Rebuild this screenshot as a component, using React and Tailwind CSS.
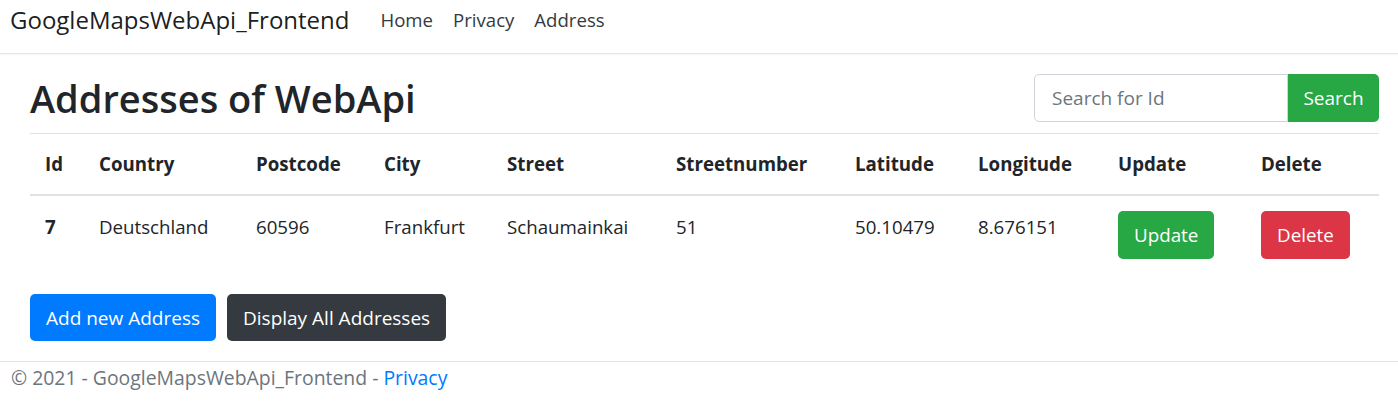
import React from 'react';

const columns = [
  { key: 'id', label: 'Id', w: 'w-[54px]' },
  { key: 'country', label: 'Country', w: 'w-[157px]' },
  { key: 'postcode', label: 'Postcode', w: 'w-[128px]' },
  { key: 'city', label: 'City', w: 'w-[123px]' },
  { key: 'street', label: 'Street', w: 'w-[169px]' },
  { key: 'streetnumber', label: 'Streetnumber', w: 'w-[179px]' },
  { key: 'latitude', label: 'Latitude', w: 'w-[123px]' },
  { key: 'longitude', label: 'Longitude', w: 'w-[140px]' },
  { key: 'update', label: 'Update', w: 'w-[143px]' },
  { key: 'delete', label: 'Delete', w: '' },
];

const addresses = [
  {
    id: 7,
    country: 'Deutschland',
    postcode: '60596',
    city: 'Frankfurt',
    street: 'Schaumainkai',
    streetnumber: '51',
    latitude: '50.10479',
    longitude: '8.676151',
  },
];

export default function App() {
  return (
    <div className="min-h-[402px] bg-white text-[18.7px] leading-[24px] text-[#212529] font-['Open_Sans',sans-serif]">
      <nav className="h-[54px] flex items-start pt-[5px] px-[10px] border-b border-[#e5e5e5] shadow-[0_1px_3px_rgba(0,0,0,0.04)]">
        <span className="text-[24px] leading-[30px] text-black/90 mr-[21px]">GoogleMapsWebApi_Frontend</span>
        <div className="flex text-[#343a40] text-[18.6px] leading-[30px]">
          <a className="px-[10px]">Home</a>
          <a className="px-[10px]">Privacy</a>
          <a className="px-[10px]">Address</a>
        </div>
      </nav>

      <main className="pl-[30px] pr-[19px]">
        <div className="flex items-center justify-between mt-[20px] h-[48px]">
          <h1 className="text-[38px] leading-[48px] font-semibold">Addresses of WebApi</h1>
          <div className="flex h-[48px]">
            <input
              placeholder="Search for Id"
              className="w-[254px] h-[48px] px-[17px] text-[19px] border border-[#ced4da] rounded-l-[5px] placeholder:text-[#6c757d] outline-none"
            />
            <button className="w-[91px] h-[48px] bg-[#28a745] text-white text-[19px] rounded-r-[5px]">Search</button>
          </div>
        </div>

        <table className="w-full table-fixed mt-[11px] border-t border-[#dee2e6] border-collapse">
          <colgroup>
            {columns.map((c) => (
              <col key={c.key} className={c.w} />
            ))}
          </colgroup>
          <thead>
            <tr className="border-b-2 border-[#dee2e6]">
              {columns.map((c) => (
                <th key={c.key} className="text-left font-bold pl-[15px] py-[18px] align-bottom">
                  {c.label}
                </th>
              ))}
            </tr>
          </thead>
          <tbody>
            {addresses.map((a) => (
              <tr key={a.id}>
                <td className="pl-[15px] pt-[19px] align-top font-bold">{a.id}</td>
                <td className="pl-[15px] pt-[19px] align-top">{a.country}</td>
                <td className="pl-[15px] pt-[19px] align-top">{a.postcode}</td>
                <td className="pl-[15px] pt-[19px] align-top">{a.city}</td>
                <td className="pl-[15px] pt-[19px] align-top">{a.street}</td>
                <td className="pl-[15px] pt-[19px] align-top">{a.streetnumber}</td>
                <td className="pl-[15px] pt-[19px] align-top">{a.latitude}</td>
                <td className="pl-[15px] pt-[19px] align-top">{a.longitude}</td>
                <td className="pl-[15px] pt-[15px] pb-[15px] align-top">
                  <button className="h-[48px] px-[16px] bg-[#28a745] text-white text-[18.8px] rounded-[5px]">Update</button>
                </td>
                <td className="pl-[15px] pt-[15px] pb-[15px] align-top">
                  <button className="h-[48px] px-[16px] bg-[#dc3545] text-white text-[18.8px] rounded-[5px]">Delete</button>
                </td>
              </tr>
            ))}
          </tbody>
        </table>

        <div className="flex gap-[11px] mt-[20px]">
          <button className="h-[47px] px-[16px] bg-[#007bff] text-white text-[19px] rounded-[5px]">Add new Address</button>
          <button className="h-[47px] px-[16px] bg-[#343a40] text-white text-[19px] rounded-[5px]">Display All Addresses</button>
        </div>
      </main>

      <footer className="mt-[20px] border-t border-[#e5e5e5] h-[41px] pt-[4px] px-[11px] text-[19.4px] text-[#6c757d]">
        © 2021 - GoogleMapsWebApi_Frontend - <a className="text-[#007bff]">Privacy</a>
      </footer>
    </div>
  );
}
